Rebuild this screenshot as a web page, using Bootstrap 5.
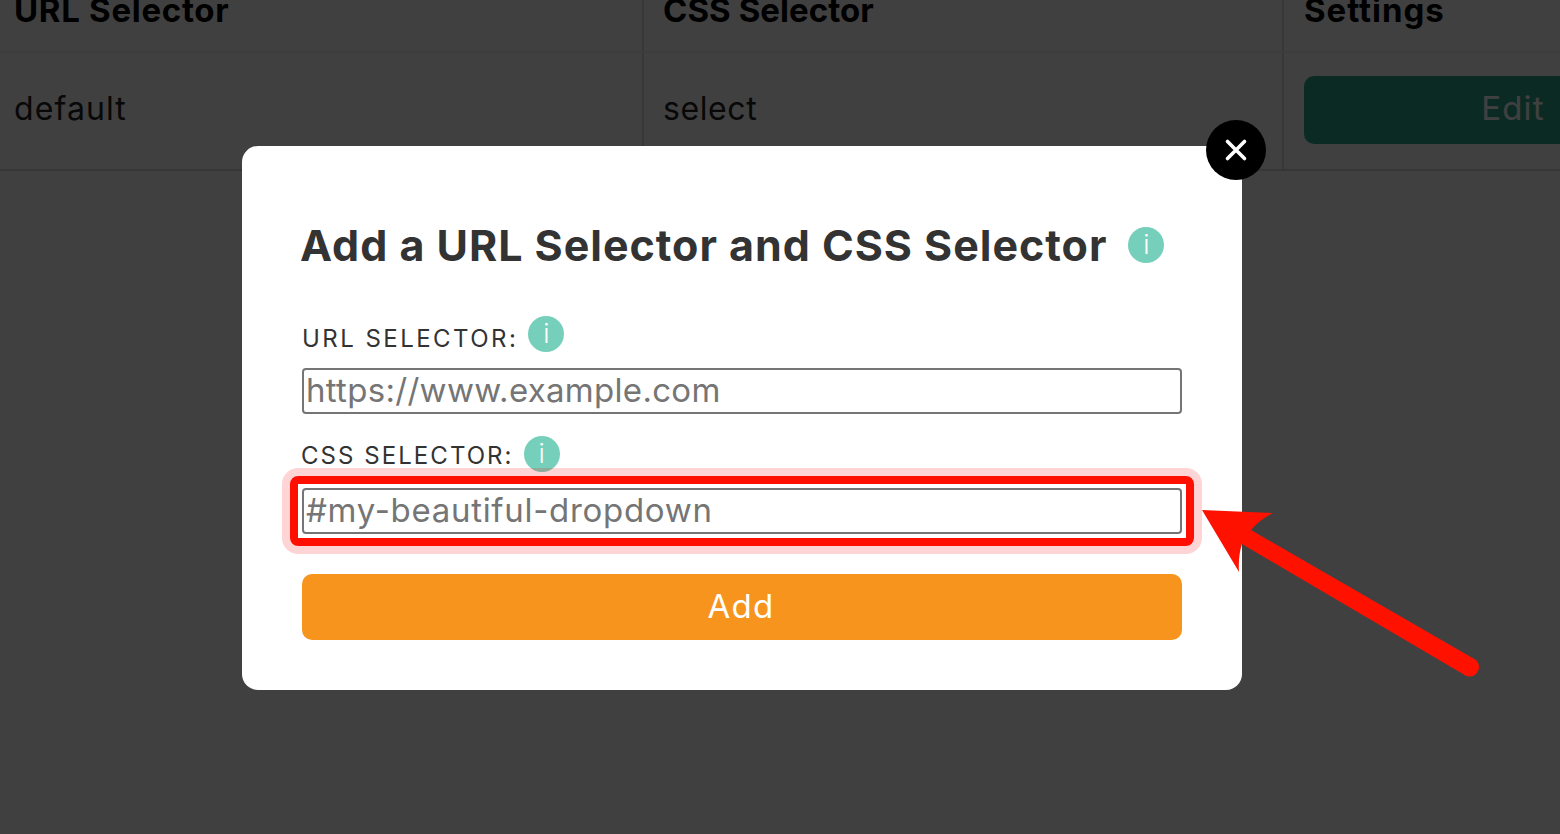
<!DOCTYPE html>
<html lang="en">
<head>
<meta charset="utf-8">
<title>Add a URL Selector and CSS Selector</title>
<link href="https://cdn.jsdelivr.net/npm/bootstrap@5.3.0/dist/css/bootstrap.min.css" rel="stylesheet">
<style>
html,body{height:100%;overflow:hidden;margin:0;background:#fff;}
body{font-family:Inter,"Liberation Sans",sans-serif;color:#333;}
.sel-page{width:1925px;margin-top:-20px;}
.sel-table{table-layout:fixed;width:1925px;margin:0;border-color:#ddd;color:#222;}
.sel-table th{height:72px;font-size:33px;font-weight:700;padding:12px 14px 0;vertical-align:top;line-height:36px;letter-spacing:.7px;background:#fff;color:#000;border-right:2px solid #e0e0e0;border-bottom:2px solid #f4f4f4;white-space:nowrap;}
.sel-table td{height:118px;font-size:32px;padding:0 14px 4px;letter-spacing:1.1px;vertical-align:middle;border-right:2px solid #e0e0e0;border-bottom:2px solid #d8d8d8;}
.sel-table th:nth-child(2),.sel-table td:nth-child(2){padding-left:19px;}
.sel-table th:nth-child(2){letter-spacing:.05px;}
.sel-table td:nth-child(2){letter-spacing:.6px;}
.sel-table th:last-child,.sel-table td:last-child{padding-left:20px;border-right:0;}
.sel-table th:last-child{letter-spacing:.95px;}
.sel-table td:last-child{padding-bottom:2px;}
.sel-edit.btn{display:block;width:418px;height:68px;background:#2fa98f;color:#fff;border:0;border-radius:10px;font-size:33px;letter-spacing:1.2px;padding:0 0 3px;}
.sel-overlay{position:fixed;inset:0;background:rgba(0,0,0,.75);padding:146px 0 0 242px;}
.sel-box{position:relative;width:1000px;height:544px;background:#fff;border-radius:16px;padding:72px 60px 0;}
.sel-title{font-size:43px;font-weight:700;line-height:54px;margin:0 0 44px -2px;color:#333;letter-spacing:.97px;gap:21px;white-space:nowrap;}
.sel-info{flex:none;width:36px;height:36px;border-radius:50%;background:#76cfbb;color:#fff;font-size:27px;font-weight:300;line-height:36px;letter-spacing:0;text-align:center;}
.sel-label{font-size:24px;line-height:30px;letter-spacing:2.45px;color:#333;margin:0;gap:10px;height:36px;}
.sel-lbltext{padding-top:8px;}
.sel-label-css{letter-spacing:2.05px;}
.sel-label-css .sel-lbltext{padding-top:5px;margin-left:-1px;}
.sel-input.form-control{height:46px;border:2px solid #757575;border-radius:4px;padding:0 2px;font-size:33px;color:#333;box-shadow:none;}
.sel-input::placeholder{color:#757575;opacity:1;}
.sel-ls-a{letter-spacing:.3px;}
.sel-ls-b{letter-spacing:.7px;}
.sel-field{margin:16px 0 22px;}
.sel-field-last{position:relative;margin:16px 0 40px;}
.sel-hl{position:absolute;inset:-12px;border:8px solid #ff0f00;border-radius:8px;box-shadow:0 0 0 8px rgba(255,0,0,.17);pointer-events:none;}
.sel-add.btn{display:block;width:100%;height:66px;background:#f7941e;border:0;border-radius:10px;color:#fff;font-size:33px;letter-spacing:1.3px;padding:0 2px 0 0;}
.sel-close{position:absolute;top:-26px;right:-24px;width:60px;height:60px;border:0;border-radius:50%;background:#000;padding:0;}
.sel-arrow{position:absolute;left:0;top:0;width:1560px;height:834px;pointer-events:none;}
</style>
</head>
<body>
<div class="sel-page">
<table class="table sel-table">
<colgroup><col style="width:643px"><col style="width:640px"><col></colgroup>
<thead><tr><th>URL Selector</th><th>CSS Selector</th><th>Settings</th></tr></thead>
<tbody><tr><td>default</td><td>select</td><td><button type="button" class="btn sel-edit">Edit</button></td></tr></tbody>
</table>
</div>
<div class="sel-overlay">
<div class="sel-box">
<button type="button" class="sel-close" aria-label="Close"><svg width="60" height="60" viewBox="0 0 60 60"><path d="M21.5 21.5L38.5 38.5M38.5 21.5L21.5 38.5" stroke="#fff" stroke-width="3.6" stroke-linecap="round" fill="none"/></svg></button>
<h2 class="sel-title d-flex align-items-center">Add a URL Selector and CSS Selector <span class="sel-info">i</span></h2>
<form>
<div class="sel-label d-flex"><span class="sel-lbltext">URL SELECTOR:</span><span class="sel-info">i</span></div>
<div class="sel-field"><input class="form-control sel-input sel-ls-a" placeholder="https://www.example.com"></div>
<div class="sel-label sel-label-css d-flex"><span class="sel-lbltext">CSS SELECTOR:</span><span class="sel-info">i</span></div>
<div class="sel-field-last"><input class="form-control sel-input sel-ls-b" placeholder="#my-beautiful-dropdown"><span class="sel-hl"></span></div>
<button type="button" class="btn sel-add">Add</button>
</form>
</div>
<svg class="sel-arrow" viewBox="0 0 1560 834"><path d="M1202 510L1273 513Q1259 520 1251 530L1476 660A8 8 0 0 1 1463 674L1242 544Q1238 556 1239 572Z" fill="#ff1100"/></svg>
</div>
</body>
</html>
